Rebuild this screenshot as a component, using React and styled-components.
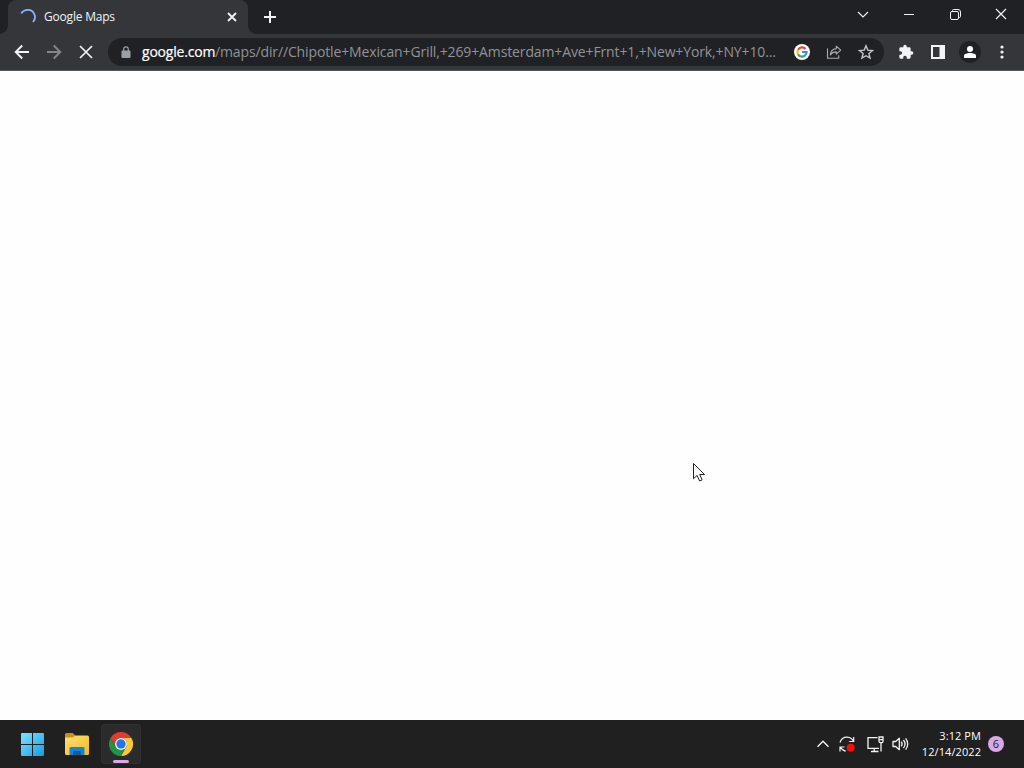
import React from 'react';
import styled, { createGlobalStyle } from 'styled-components';

const GlobalStyle = createGlobalStyle`
  * {
    box-sizing: border-box;
  }
  body {
    margin: 0;
    overflow: hidden;
    font-family: 'Open Sans', 'Noto Sans', sans-serif;
  }
  svg {
    display: block;
    flex: none;
  }
`;

const Desktop = styled.div`
  width: 1024px;
  height: 768px;
  display: flex;
  flex-direction: column;
  background: #fefefe;
`;

const TitleBar = styled.div`
  height: 34px;
  display: flex;
  padding-left: 8px;
  background: #202124;
`;

const Tab = styled.div`
  position: relative;
  width: 240px;
  display: flex;
  align-items: center;
  padding: 0 8px 0 12px;
  border-radius: 8px 8px 0 0;
  background: #35363a;
  &::before,
  &::after {
    content: '';
    position: absolute;
    bottom: 0;
    width: 8px;
    height: 8px;
  }
  &::before {
    left: -8px;
    background: radial-gradient(circle at 0 0, #202124 7.5px, #35363a 8px);
  }
  &::after {
    right: -8px;
    background: radial-gradient(circle at 100% 0, #202124 7.5px, #35363a 8px);
  }
`;

const TabTitle = styled.div`
  flex: 1;
  margin-left: 8px;
  color: #f1f3f4;
  font-size: 12px;
  line-height: 16px;
  letter-spacing: -0.2px;
  white-space: nowrap;
`;

const IconButton = styled.div`
  flex: none;
  width: ${({ $width }) => $width || 32}px;
  height: ${({ $height }) => $height || 28}px;
  display: flex;
  align-items: center;
  justify-content: center;
  color: ${({ $color }) => $color || '#f1f3f4'};
`;

const WindowControls = styled.div`
  display: flex;
  margin-left: auto;
`;

const Toolbar = styled.div`
  height: 37px;
  display: flex;
  padding: 4px 6px 0;
  background: #35363a;
  border-bottom: 1px solid #55565a;
`;

const Omnibox = styled.div`
  width: 776px;
  height: 28px;
  margin: 0 6px;
  display: flex;
  align-items: center;
  padding: 0 2px;
  border-radius: 14px;
  background: #202124;
`;

const Url = styled.div`
  flex: 1;
  display: flex;
  color: #909396;
  font-size: 14px;
  line-height: 20px;
  white-space: nowrap;
`;

const Host = styled.span`
  width: 73px;
  color: #fff;
  letter-spacing: -0.2px;
  -webkit-text-stroke: 0.2px #fff;
`;

const Path = styled.span`
  letter-spacing: -0.13px;
`;

const Avatar = styled.div`
  width: 22px;
  height: 22px;
  display: flex;
  align-items: center;
  justify-content: center;
  border-radius: 50%;
  background: #202124;
`;

const Page = styled.div`
  position: relative;
  flex: 1;
  background: #fefefe;
`;

const Pointer = styled.svg`
  position: absolute;
  left: 692px;
  top: 391px;
`;

const Taskbar = styled.div`
  height: 48px;
  display: flex;
  align-items: center;
  padding: 0 20px 0 12px;
  background: #202020;
`;

const Apps = styled.div`
  display: flex;
  gap: 4.5px;
`;

const AppButton = styled.div`
  position: relative;
  width: 40px;
  height: 40px;
  display: flex;
  align-items: center;
  justify-content: center;
  border-radius: 4px;
  background: ${({ $active }) => ($active ? '#2b2b2b' : 'transparent')};
  box-shadow: ${({ $active }) => ($active ? 'inset 0 0 0 1px #303030' : 'none')};
`;

const ActiveMark = styled.div`
  position: absolute;
  left: 12px;
  bottom: 1px;
  width: 16px;
  height: 3px;
  border-radius: 2px;
  background: #d9a8e6;
`;

const Tray = styled.div`
  display: flex;
  align-items: center;
  margin-left: auto;
`;

const Clock = styled.div`
  width: 72px;
  color: #fff;
  font-size: 11px;
  line-height: 16px;
  letter-spacing: 0.08px;
  text-align: right;
`;

const Badge = styled.div`
  width: 16px;
  height: 16px;
  margin-left: 7px;
  border-radius: 50%;
  background: #d9a8e6;
  color: #202020;
  font-size: 11px;
  line-height: 16px;
  text-align: center;
`;

const stroke = { fill: 'none', stroke: 'currentColor' };

const Spinner = () => (
  <svg width="16" height="16" viewBox="0 0 16 16" fill="none" stroke="#8ab4f8" strokeWidth="1.8">
    <path d="M1.200 4.400C4.600-.2 11.600-.3 14.200 4.800c1.300 2.700.8 5.900-1.200 8.200" />
  </svg>
);

const Cross = ({ size, weight }) => (
  <svg width={size} height={size} viewBox={`0 0 ${size} ${size}`} {...stroke} strokeWidth={weight}>
    <path d={`M1 1L${size - 1} ${size - 1}M${size - 1} 1L1 ${size - 1}`} />
  </svg>
);

const Plus = () => (
  <svg width="12" height="12" viewBox="0 0 12 12" {...stroke} strokeWidth="2">
    <path d="M6 0v12M0 6h12" />
  </svg>
);

const Arrow = ({ forward }) => (
  <svg width="16" height="16" viewBox="0 0 16 16" {...stroke} strokeWidth="1.9">
    <path d={forward ? 'M1 8h13M7.800 1.500L14.300 8l-6.500 6.500' : 'M15 8H2M8.200 1.500L1.700 8l6.500 6.500'} />
  </svg>
);

const Lock = () => (
  <svg width="10" height="13" viewBox="0 0 10 13">
    <rect x=".5" y="4.500" width="9" height="7.500" rx="1" fill="#9aa0a6" />
    <path d="M2.700 5V3.200a2.300 2.300 0 0 1 4.600 0V5" fill="none" stroke="#9aa0a6" strokeWidth="1.200" />
  </svg>
);

const GoogleMark = () => (
  <svg width="16" height="16" viewBox="0 0 16 16" fill="none" strokeWidth="2.1">
    <circle cx="8" cy="8" r="8" fill="#fff" />
    <path d="M11.600 5A4.600 4.600 0 0 0 4 5.800" stroke="#ea4335" />
    <path d="M4 5.700a4.700 4.700 0 0 0 0 4.600" stroke="#fbbc05" />
    <path d="M4 10.200a4.600 4.600 0 0 0 7.100 1.200" stroke="#34a853" />
    <path d="M11 11.500A4.600 4.600 0 0 0 12.600 8H8.100" stroke="#4285f4" />
  </svg>
);

const Share = () => (
  <svg width="16" height="16" viewBox="0 0 16 16" {...stroke} strokeWidth="1.1">
    <path d="M1.500 4.500v9.800h11.200v-3" />
    <path d="M10.300 2.200l4.400 4-4.400 4V7.900C7.500 7.800 5.800 8.700 4.300 11c.3-3.800 2.500-6 6-6.400z" strokeLinejoin="round" />
  </svg>
);

const Star = () => (
  <svg width="16" height="16" viewBox="0 0 16 16" {...stroke} strokeWidth="1.4">
    <path d="M8 1.800l1.800 4.300 4.700.4-3.600 3 1.100 4.600L8 11.700l-4 2.400 1.100-4.600-3.600-3 4.700-.4z" />
  </svg>
);

const Puzzle = () => (
  <svg width="16" height="16" viewBox="0 0 24 24" fill="currentColor">
    <path d="M20.500 11H19V7c0-1.100-.9-2-2-2h-4V3.500a2.500 2.500 0 0 0-5 0V5H4c-1.100 0-2 .9-2 2v3.800h1.500a2.700 2.700 0 0 1 0 5.400H2V20c0 1.100.9 2 2 2h3.800v-1.500a2.700 2.700 0 0 1 5.400 0V22H17c1.100 0 2-.9 2-2v-4h1.500a2.500 2.500 0 0 0 0-5z" />
  </svg>
);

const SidePanel = () => (
  <svg width="14" height="14" viewBox="0 0 14 14">
    <path d="M0 0h14v14H0zM2 2v10h6.500V2z" fill="currentColor" fillRule="evenodd" />
  </svg>
);

const Person = () => (
  <svg width="12" height="12" viewBox="0 0 12 12" fill="currentColor">
    <circle cx="6" cy="3" r="3" />
    <path d="M0 12V9.800C0 7.900 3 7 6 7s6 .9 6 2.800V12z" />
  </svg>
);

const Dots = () => (
  <svg width="4" height="14" viewBox="0 0 4 14" fill="currentColor">
    <circle cx="2" cy="2" r="1.600" />
    <circle cx="2" cy="7" r="1.600" />
    <circle cx="2" cy="12" r="1.600" />
  </svg>
);

const Chevron = ({ up }) => (
  <svg width="12" height="8" viewBox="0 0 12 8" {...stroke} strokeWidth={up ? 1.4 : 1.1}>
    <path d={up ? 'M.5 6.700L6 1.200l5.500 5.500' : 'M1 1l5 5 5-5'} />
  </svg>
);

const Restore = () => (
  <svg width="11" height="11" viewBox="0 0 11 11" {...stroke}>
    <rect x=".5" y="2.500" width="8" height="8" rx="1.500" />
    <path d="M2.500 2V1.500c0-.5.4-1 1-1h4.500a2.500 2.500 0 0 1 2.500 2.500v4.500c0 .6-.5 1-1 1H9" />
  </svg>
);

const Windows = () => (
  <svg width="23" height="23" viewBox="0 0 23 23">
    <defs>
      <linearGradient id="win" x1="0" y1="0" x2="1" y2="1">
        <stop stopColor="#7fe3fb" />
        <stop offset="1" stopColor="#159be8" />
      </linearGradient>
    </defs>
    <path d="M1 0h10v11H0V1a1 1 0 0 1 1-1zM12 0h10a1 1 0 0 1 1 1v10H12zM0 12h11v11H1a1 1 0 0 1-1-1zM12 12h11v10a1 1 0 0 1-1 1H12z" fill="url(#win)" />
  </svg>
);

const Folder = () => (
  <svg width="26" height="24" viewBox="0 0 26 24">
    <defs>
      <linearGradient id="folder" x1="0" y1="0" x2="1" y2="1">
        <stop stopColor="#ffe07a" />
        <stop offset="1" stopColor="#f6b91d" />
      </linearGradient>
    </defs>
    <path d="M1 2.500A1.500 1.500 0 0 1 2.500 1h6.300l2.700 2.700V8H1z" fill="#c9901c" />
    <path d="M1 5.500h8l2.200-2h12.300A1.500 1.500 0 0 1 25 5v16.500a1.500 1.500 0 0 1-1.500 1.500h-21A1.500 1.500 0 0 1 1 21.500z" fill="url(#folder)" />
    <path d="M5.500 23v-6.500a1.500 1.500 0 0 1 1.500-1.500h12a1.500 1.500 0 0 1 1.500 1.500V23z" fill="#1784d1" />
    <path d="M9 23v-3a1 1 0 0 1 1-1h6a1 1 0 0 1 1 1v3z" fill="#0d5d9d" />
  </svg>
);

const Chrome = () => (
  <svg width="24" height="24" viewBox="0 0 24 24">
    <path d="M1.600 6A12 12 0 0 1 22.400 6H12a6 6 0 0 0-5.200 9z" fill="#e33b2e" />
    <path d="M22.400 6A12 12 0 0 1 12 24l5.200-9A6 6 0 0 0 12 6z" fill="#fcc934" />
    <path d="M12 24A12 12 0 0 1 1.600 6l5.200 9a6 6 0 0 0 10.400 0z" fill="#229342" />
    <circle cx="12" cy="12" r="6" fill="#fff" />
    <circle cx="12" cy="12" r="4.700" fill="#2673e8" />
  </svg>
);

const Sync = () => (
  <svg width="18" height="18" viewBox="0 0 18 18" {...stroke} strokeWidth="1.200">
    <path d="M2 7.500C3.200 3.800 6.400 2 9.500 2.200c2.600.2 4.600 1.600 5.800 3.800M15.700 2v4.500h-4.500M2 16.500V12h4.500M2.500 12.300c1 2 3 3.500 5.200 3.800" />
    <circle cx="12.700" cy="12.800" r="4" fill="#f40f0f" stroke="none" />
  </svg>
);

const Network = () => (
  <svg width="17" height="17" viewBox="0 0 17 17" {...stroke} strokeWidth="1.300">
    <path d="M10.500 1.600H1v10.800h11M7.200 12.400v3M4 15.500h7.500M14 7v8.500" />
    <path d="M12 1h4v4.200a1.500 1.500 0 0 1-1.500 1.500h-1A1.500 1.500 0 0 1 12 5.200zM12 3.700h4" />
  </svg>
);

const Speaker = () => (
  <svg width="17" height="16" viewBox="0 0 17 16" {...stroke} strokeWidth="1.300">
    <path d="M1 5.500h2.700l3.600-3.200v11.400l-3.600-3.200H1z" strokeLinejoin="round" />
    <path d="M9.200 5.700c1.100 1.400 1.100 3.200 0 4.600M11.400 4c2 2.400 2 5.600 0 8M13.600 2.400c2.800 3.300 2.800 7.900 0 11.200" />
  </svg>
);

const App = () => (
  <>
    <GlobalStyle />
    <Desktop>
      <TitleBar>
        <Tab>
          <Spinner />
          <TabTitle>Google Maps</TabTitle>
          <IconButton $width={16}>
            <Cross size={10} weight={1.8} />
          </IconButton>
        </Tab>
        <IconButton $width={44} $height={34}>
          <Plus />
        </IconButton>
        <WindowControls>
          <IconButton $width={46} $height={29}>
            <Chevron />
          </IconButton>
          <IconButton $width={46} $height={29}>
            <svg width="10" height="1">
              <rect width="10" height="1" fill="currentColor" />
            </svg>
          </IconButton>
          <IconButton $width={46} $height={29}>
            <Restore />
          </IconButton>
          <IconButton $width={46} $height={28}>
            <Cross size={12} weight={1.2} />
          </IconButton>
        </WindowControls>
      </TitleBar>
      <Toolbar>
        <IconButton>
          <Arrow />
        </IconButton>
        <IconButton $color="#85868a">
          <Arrow forward />
        </IconButton>
        <IconButton>
          <Cross size={14} weight={1.7} />
        </IconButton>
        <Omnibox>
          <IconButton>
            <Lock />
          </IconButton>
          <Url>
            <Host>google.com</Host>
            <Path>/maps/dir//Chipotle+Mexican+Grill,+269+Amsterdam+Ave+Frnt+1,+New+York,+NY+10...</Path>
          </Url>
          <IconButton>
            <GoogleMark />
          </IconButton>
          <IconButton $color="#aaadb0">
            <Share />
          </IconButton>
          <IconButton $color="#c4c7ca">
            <Star />
          </IconButton>
        </Omnibox>
        <IconButton>
          <Puzzle />
        </IconButton>
        <IconButton>
          <SidePanel />
        </IconButton>
        <IconButton $color="#fff">
          <Avatar>
            <Person />
          </Avatar>
        </IconButton>
        <IconButton>
          <Dots />
        </IconButton>
      </Toolbar>
      <Page>
        <Pointer width="14" height="21" viewBox="0 0 14 21">
          <path d="M1.500 1.500v15.300l3.600-3.400 2.500 5.600 2.500-1.100-2.400-5.400h4.800z" fill="#fff" stroke="#222" />
        </Pointer>
      </Page>
      <Taskbar>
        <Apps>
          <AppButton>
            <Windows />
          </AppButton>
          <AppButton>
            <Folder />
          </AppButton>
          <AppButton $active>
            <Chrome />
            <ActiveMark />
          </AppButton>
        </Apps>
        <Tray>
          <IconButton $width={24}>
            <Chevron up />
          </IconButton>
          <IconButton $width={24}>
            <Sync />
          </IconButton>
          <IconButton $width={32}>
            <Network />
          </IconButton>
          <IconButton $width={18}>
            <Speaker />
          </IconButton>
          <Clock>
            <div>3:12 PM</div>
            <div>12/14/2022</div>
          </Clock>
          <Badge>6</Badge>
        </Tray>
      </Taskbar>
    </Desktop>
  </>
);

export default App;
